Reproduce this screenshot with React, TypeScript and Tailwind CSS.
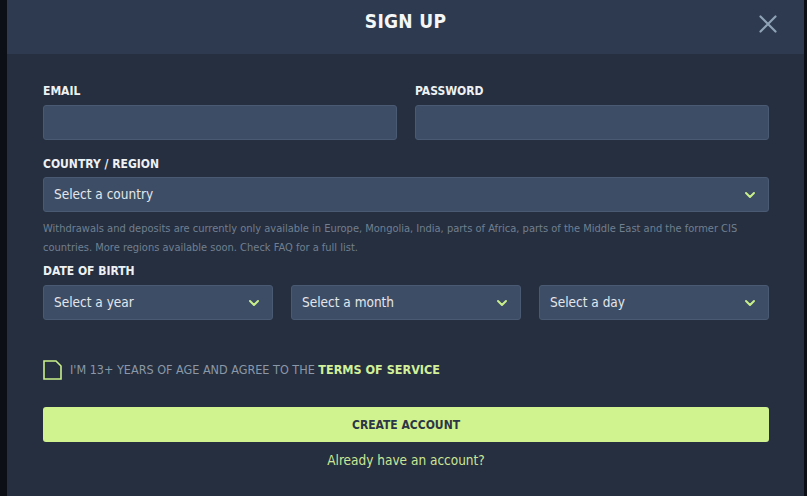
import React from 'react';

const font = { fontFamily: '"DejaVu Sans Condensed", "Roboto", sans-serif' };

const Chevron: React.FC = () => (
  <svg width="12" height="8" viewBox="0 0 12 8" className="shrink-0">
    <path d="M2 2 L6 6 L10 2" fill="none" stroke="#c9ef8a" strokeWidth="2" strokeLinecap="round" strokeLinejoin="round" />
  </svg>
);

const Select: React.FC<{ label: string }> = ({ label }) => (
  <div className="flex h-[35px] items-center justify-between rounded-[3px] border border-[#4a5a72] bg-[#3d4d66] pl-[10px] pr-[12px]">
    <span className="text-[13.5px] text-[#e3e7ec]">{label}</span>
    <Chevron />
  </div>
);

const Label: React.FC<{ children: React.ReactNode }> = ({ children }) => (
  <p className="text-[12px] font-bold leading-none text-[#eef1f4]">{children}</p>
);

export default function App() {
  return (
    <div className="flex h-[496px] w-[807px] bg-[#0c1016]" style={font}>
      <div className="ml-[7px] flex w-[797px] flex-col bg-[#252f3f]">
        {/* Header */}
        <div className="relative flex h-[54px] items-center justify-center bg-[#2e3a4f]">
          <h1 className="mb-[12px] text-[19px] font-bold tracking-[0.3px] text-[#f4f6f8]">SIGN UP</h1>
          <svg className="absolute right-[27px] top-[15px]" width="18" height="18" viewBox="0 0 18 18">
            <path d="M1.5 1.5 L16.5 16.5 M16.5 1.5 L1.5 16.5" stroke="#8fa3b6" strokeWidth="2.2" strokeLinecap="round" />
          </svg>
        </div>

        {/* Form */}
        <div className="flex flex-col pl-[36px] pr-[35px] pt-[31px]">
          <div className="grid grid-cols-2 gap-x-[18px]">
            <div className="flex flex-col gap-[8px]">
              <Label>EMAIL</Label>
              <div className="h-[35px] rounded-[3px] border border-[#4a5a72] bg-[#3d4d66]" />
            </div>
            <div className="flex flex-col gap-[8px]">
              <Label>PASSWORD</Label>
              <div className="h-[35px] rounded-[3px] border border-[#4a5a72] bg-[#3d4d66]" />
            </div>
          </div>

          <div className="mt-[18px] flex flex-col gap-[7px]">
            <Label>COUNTRY / REGION</Label>
            <Select label="Select a country" />
          </div>

          <p className="mt-[7px] text-[11px] leading-[19px] text-[#717f91]">
            Withdrawals and deposits are currently only available in Europe, Mongolia, India, parts of Africa, parts of
            the Middle East and the former CIS countries. More regions available soon. Check FAQ for a full list.
          </p>

          <div className="mt-[8px] flex flex-col gap-[8px]">
            <Label>DATE OF BIRTH</Label>
            <div className="grid grid-cols-3 gap-x-[18px]">
              <Select label="Select a year" />
              <Select label="Select a month" />
              <Select label="Select a day" />
            </div>
          </div>

          <div className="mt-[40px] flex items-center gap-[8px]">
            <svg width="19" height="20" viewBox="0 0 19 20" className="shrink-0">
              <path d="M1 1 H13 L18 6 V19 H1 Z" fill="none" stroke="#c9ef8a" strokeWidth="1.6" strokeLinejoin="miter" />
            </svg>
            <p className="text-[12.5px] text-[#8b98a8]">
              I'M 13+ YEARS OF AGE AND AGREE TO THE <span className="font-bold text-[#d2f09a]">TERMS OF SERVICE</span>
            </p>
          </div>

          <button className="mt-[27px] flex h-[35px] items-center justify-center rounded-[3px] bg-[#d0f28f] text-[12px] font-bold text-[#2c3646]">
            CREATE ACCOUNT
          </button>

          <p className="mt-[8px] text-center text-[13.5px] text-[#cbe695]">Already have an account?</p>
        </div>
      </div>
    </div>
  );
}
